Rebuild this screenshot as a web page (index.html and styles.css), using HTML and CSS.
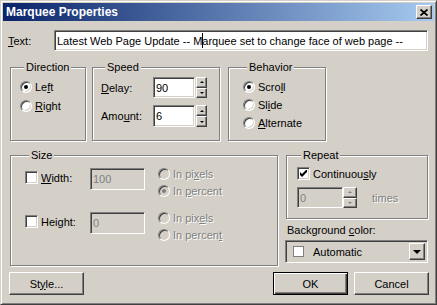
FILE: index.html
```html
<!DOCTYPE html>
<html lang="en">
<head>
    <meta charset="UTF-8">
    <title>Marquee Properties</title>
    <link rel="stylesheet" href="styles.css">
</head>
<body>
    <div class="window">
        <div class="titlebar">
            <span class="title">Marquee Properties</span>
            <span class="close-btn">
                <svg width="8" height="7" viewBox="0 0 8 7">
                    <path d="M0.5 0.5 L7.5 6.5 M7.5 0.5 L0.5 6.5" stroke="#000" stroke-width="1.7" fill="none"/>
                </svg>
            </span>
        </div>

        <div class="dialog">
            <div class="text-row">
                <span class="row-label"><u>T</u>ext:</span>
                <div class="field text-field">Latest Web Page Update -- M<span class="ibeam"></span>arquee set to change face of web page --</div>
            </div>

            <div class="groups-row">
                <div class="group direction">
                    <div class="group-title">Direction</div>
                    <div class="radio-row first"><span class="radio checked"></span><span>Le<u>f</u>t</span></div>
                    <div class="radio-row"><span class="radio"></span><span><u>R</u>ight</span></div>
                </div>

                <div class="group speed">
                    <div class="group-title">Speed</div>
                    <div class="spin-row first">
                        <span class="spin-label"><u>D</u>elay:</span>
                        <div class="field num-field">90</div>
                        <div class="spin small">
                            <span class="spin-btn"><i class="arrow-up"></i></span>
                            <span class="spin-btn"><i class="arrow-down"></i></span>
                        </div>
                    </div>
                    <div class="spin-row second">
                        <span class="spin-label">Amo<u>u</u>nt:</span>
                        <div class="field num-field">6</div>
                        <div class="spin small">
                            <span class="spin-btn"><i class="arrow-up"></i></span>
                            <span class="spin-btn"><i class="arrow-down"></i></span>
                        </div>
                    </div>
                </div>

                <div class="group behavior">
                    <div class="group-title">Behavior</div>
                    <div class="radio-row short first"><span class="radio checked"></span><span>Scro<u>l</u>l</span></div>
                    <div class="radio-row short"><span class="radio"></span><span>Sl<u>i</u>de</span></div>
                    <div class="radio-row short"><span class="radio"></span><span><u>A</u>lternate</span></div>
                </div>
            </div>

            <div class="lower-row">
                <div class="group size">
                    <div class="group-title">Size</div>
                    <div class="size-row first">
                        <div class="check-label"><span class="checkbox"></span><span><u>W</u>idth:</span></div>
                        <div class="field disabled size-field">100</div>
                        <div class="radio-stack">
                            <div class="radio-row tiny disabled"><span class="radio"></span><span>In pi<u>x</u>els</span></div>
                            <div class="radio-row tiny disabled"><span class="radio checked"></span><span>In <u>p</u>ercent</span></div>
                        </div>
                    </div>
                    <div class="size-row second">
                        <div class="check-label"><span class="checkbox"></span><span>Hei<u>g</u>ht:</span></div>
                        <div class="field disabled size-field">0</div>
                        <div class="radio-stack">
                            <div class="radio-row tiny disabled"><span class="radio"></span><span>In pix<u>e</u>ls</span></div>
                            <div class="radio-row tiny disabled"><span class="radio"></span><span>In percen<u>t</u></span></div>
                        </div>
                    </div>
                </div>

                <div class="right-col">
                    <div class="group repeat">
                        <div class="group-title">Repeat</div>
                        <div class="check-row">
                            <span class="checkbox">
                                <svg width="7" height="7" viewBox="0 0 7 7">
                                    <path d="M0 2 L2 4 L6 0 L7 0 L7 2 L2 7 L0 5 Z" fill="#000"/>
                                </svg>
                            </span>
                            <span>Continuou<u>s</u>ly</span>
                        </div>
                        <div class="times-row">
                            <div class="field disabled times-field">0</div>
                            <div class="spin wide">
                                <span class="spin-btn"><i class="arrow-up off"></i></span>
                                <span class="spin-btn"><i class="arrow-down off"></i></span>
                            </div>
                            <span class="times-label">times</span>
                        </div>
                    </div>

                    <div class="bg-label">Background <u>c</u>olor:</div>
                    <div class="combo">
                        <span class="swatch"></span>
                        <span class="combo-text">Automatic</span>
                        <span class="combo-btn"><i class="arrow-combo"></i></span>
                    </div>
                </div>
            </div>

            <div class="buttons-row">
                <button class="btn">St<u>y</u>le...</button>
                <div class="btn-group">
                    <button class="btn default">OK</button>
                    <button class="btn">Cancel</button>
                </div>
            </div>
        </div>
    </div>
</body>
</html>
```

FILE: styles.css
```css
* {
    margin: 0;
    padding: 0;
    box-sizing: border-box;
}

html, body {
    width: 437px;
    height: 305px;
    overflow: hidden;
    background-color: #d4d0c8;
    font-family: "Liberation Sans", Arial, sans-serif;
    font-size: 11px;
    color: #000;
}

u {
    text-decoration: underline;
}

.window {
    width: 437px;
    height: 305px;
    border: 1px solid;
    border-color: #d4d0c8 #404040 #404040 #d4d0c8;
    box-shadow: inset 1px 1px 0 #fff, inset -1px -1px 0 #808080;
    padding: 2px;
    display: flex;
    flex-direction: column;
}

/* barra de titulo */
.titlebar {
    height: 18px;
    background: linear-gradient(to right, #0a246a, #a6caf0);
    display: flex;
    align-items: center;
    justify-content: space-between;
    padding: 0 2px 0 3px;
}

.title {
    color: #fff;
    font-weight: bold;
    font-size: 12px;
}

.close-btn {
    width: 16px;
    height: 14px;
    background-color: #d4d0c8;
    border: 1px solid;
    border-color: #fff #404040 #404040 #fff;
    box-shadow: inset -1px -1px 0 #808080;
    display: flex;
    align-items: center;
    justify-content: center;
}

.close-btn svg {
    display: block;
}

.dialog {
    padding: 9px 5px 0 5px;
}

/* campos */
.field {
    background-color: #fff;
    border: 1px solid;
    border-color: #808080 #fff #fff #808080;
    box-shadow: inset 1px 1px 0 #404040, inset -1px -1px 0 #d4d0c8;
    padding-left: 2px;
    display: flex;
    align-items: center;
    white-space: nowrap;
    overflow: hidden;
}

.field.disabled {
    background-color: #d4d0c8;
    color: #808080;
}

.text-row {
    display: flex;
    align-items: center;
    height: 21px;
}

.row-label {
    width: 46px;
}

.text-field {
    flex: 1;
    height: 21px;
    margin-right: 1px;
}

.ibeam {
    display: inline-block;
    width: 1px;
    height: 15px;
    background-color: #000;
    margin-right: -1px;
}

/* grupos */
.group {
    border: 1px solid #808080;
    box-shadow: inset 1px 1px 0 #fff, 1px 1px 0 #fff;
}

.group-title {
    display: table;
    margin: -7px 0 0 4px;
    padding: 0 2px;
    height: 13px;
    line-height: 13px;
    background-color: #d4d0c8;
}

.groups-row {
    display: flex;
    margin-top: 16px;
    padding-left: 2px;
}

.direction {
    width: 76px;
    height: 74px;
    padding-left: 9px;
}

.speed {
    width: 128px;
    height: 74px;
    margin-left: 6px;
    padding-left: 8px;
}

.behavior {
    width: 98px;
    height: 74px;
    margin-left: 8px;
    padding-left: 14px;
}

.radio-row {
    display: flex;
    align-items: center;
    height: 19px;
    white-space: nowrap;
}

.radio-row.first {
    margin-top: 3px;
}

.radio-row.short {
    height: 18px;
}

.behavior .radio-row.first {
    margin-top: 4px;
}

.radio-row.tiny {
    height: 17px;
}

.radio {
    width: 12px;
    height: 12px;
    flex-shrink: 0;
    border-radius: 50%;
    background-color: #fff;
    border: 1px solid;
    border-color: #808080 #fff #fff #808080;
    box-shadow: inset 1px 1px 0 #404040, inset -1px -1px 0 #d4d0c8;
    margin-right: 3px;
    display: flex;
    align-items: center;
    justify-content: center;
}

.radio.checked::after {
    content: "";
    width: 4px;
    height: 4px;
    border-radius: 50%;
    background-color: #000;
}

.disabled .radio {
    background-color: #d4d0c8;
}

.disabled .radio.checked::after {
    background-color: #808080;
}

.radio-row.disabled {
    color: #808080;
    text-shadow: 1px 1px 0 #fff;
}

/* velocidad */
.spin-row {
    display: flex;
    align-items: center;
    height: 21px;
}

.spin-row.first {
    margin-top: 3px;
}

.spin-row.second {
    margin-top: 7px;
    height: 22px;
}

.spin-label {
    width: 52px;
}

.num-field {
    width: 42px;
    height: 100%;
}

.spin {
    display: flex;
    flex-direction: column;
    height: 100%;
    margin-left: 1px;
}

.spin.small {
    width: 11px;
}

.spin.wide {
    width: 14px;
    margin-left: 0;
}

.spin-btn {
    flex: 1;
    background-color: #d4d0c8;
    border: 1px solid;
    border-color: #fff #404040 #404040 #fff;
    box-shadow: inset -1px -1px 0 #808080;
    display: flex;
    align-items: center;
    justify-content: center;
}

.arrow-up, .arrow-down {
    width: 0;
    height: 0;
    border-left: 2px solid transparent;
    border-right: 2px solid transparent;
}

.arrow-up {
    border-bottom: 2px solid #000;
}

.arrow-down {
    border-top: 2px solid #000;
}

.arrow-up.off {
    border-bottom-color: #808080;
}

.arrow-down.off {
    border-top-color: #808080;
}

/* parte inferior */
.lower-row {
    display: flex;
    margin-top: 14px;
    padding-left: 2px;
}

.size {
    width: 268px;
    height: 111px;
    padding-left: 14px;
}

.size-row {
    display: flex;
    align-items: flex-start;
}

.size-row.first {
    margin-top: 3px;
}

.size-row.second {
    margin-top: 10px;
}

.check-label {
    width: 65px;
    height: 13px;
    margin-top: 6px;
    display: flex;
    align-items: center;
}

.checkbox {
    width: 13px;
    height: 13px;
    flex-shrink: 0;
    background-color: #fff;
    border: 1px solid;
    border-color: #808080 #fff #fff #808080;
    box-shadow: inset 1px 1px 0 #404040, inset -1px -1px 0 #d4d0c8;
    margin-right: 3px;
    display: flex;
    align-items: center;
    justify-content: center;
}

.checkbox svg {
    display: block;
}

.size-field {
    width: 55px;
    height: 22px;
    margin-top: 3px;
}

.radio-stack {
    margin-left: 13px;
}

.right-col {
    width: 142px;
    margin-left: 8px;
}

.repeat {
    height: 64px;
    padding-left: 10px;
}

.check-row {
    display: flex;
    align-items: center;
    height: 17px;
    margin-top: 3px;
}

.times-row {
    display: flex;
    align-items: center;
    height: 21px;
    margin-top: 5px;
}

.times-field {
    width: 46px;
    height: 100%;
}

.times-label {
    margin-left: 15px;
    color: #808080;
    text-shadow: 1px 1px 0 #fff;
}

.bg-label {
    margin-top: 5px;
    margin-left: 1px;
    height: 13px;
    line-height: 13px;
}

.combo {
    margin-top: 3px;
    margin-left: -1px;
    width: 143px;
    height: 23px;
    border: 1px solid;
    border-color: #808080 #fff #fff #808080;
    box-shadow: inset 1px 1px 0 #404040, inset -1px -1px 0 #d4d0c8;
    padding: 2px 2px 2px 7px;
    display: flex;
    align-items: center;
}

.swatch {
    width: 11px;
    height: 11px;
    background-color: #fff;
    border: 1px solid #808080;
}

.combo-text {
    margin-left: 9px;
    flex: 1;
}

.combo-btn {
    width: 16px;
    height: 100%;
    background-color: #d4d0c8;
    border: 1px solid;
    border-color: #fff #404040 #404040 #fff;
    box-shadow: inset -1px -1px 0 #808080;
    display: flex;
    align-items: center;
    justify-content: center;
}

.arrow-combo {
    width: 0;
    height: 0;
    border-left: 4px solid transparent;
    border-right: 4px solid transparent;
    border-top: 4px solid #000;
}

/* botones */
.buttons-row {
    display: flex;
    justify-content: space-between;
    margin-top: 6px;
    padding-left: 1px;
}

.btn-group {
    display: flex;
    gap: 6px;
}

.btn {
    width: 75px;
    height: 23px;
    font-family: inherit;
    font-size: 11px;
    color: #000;
    background-color: #d4d0c8;
    border: 1px solid;
    border-color: #fff #404040 #404040 #fff;
    box-shadow: inset -1px -1px 0 #808080;
}

.btn.default {
    border-color: #000;
    box-shadow: inset 1px 1px 0 #fff, inset -1px -1px 0 #404040, inset -2px -2px 0 #808080;
}
```
